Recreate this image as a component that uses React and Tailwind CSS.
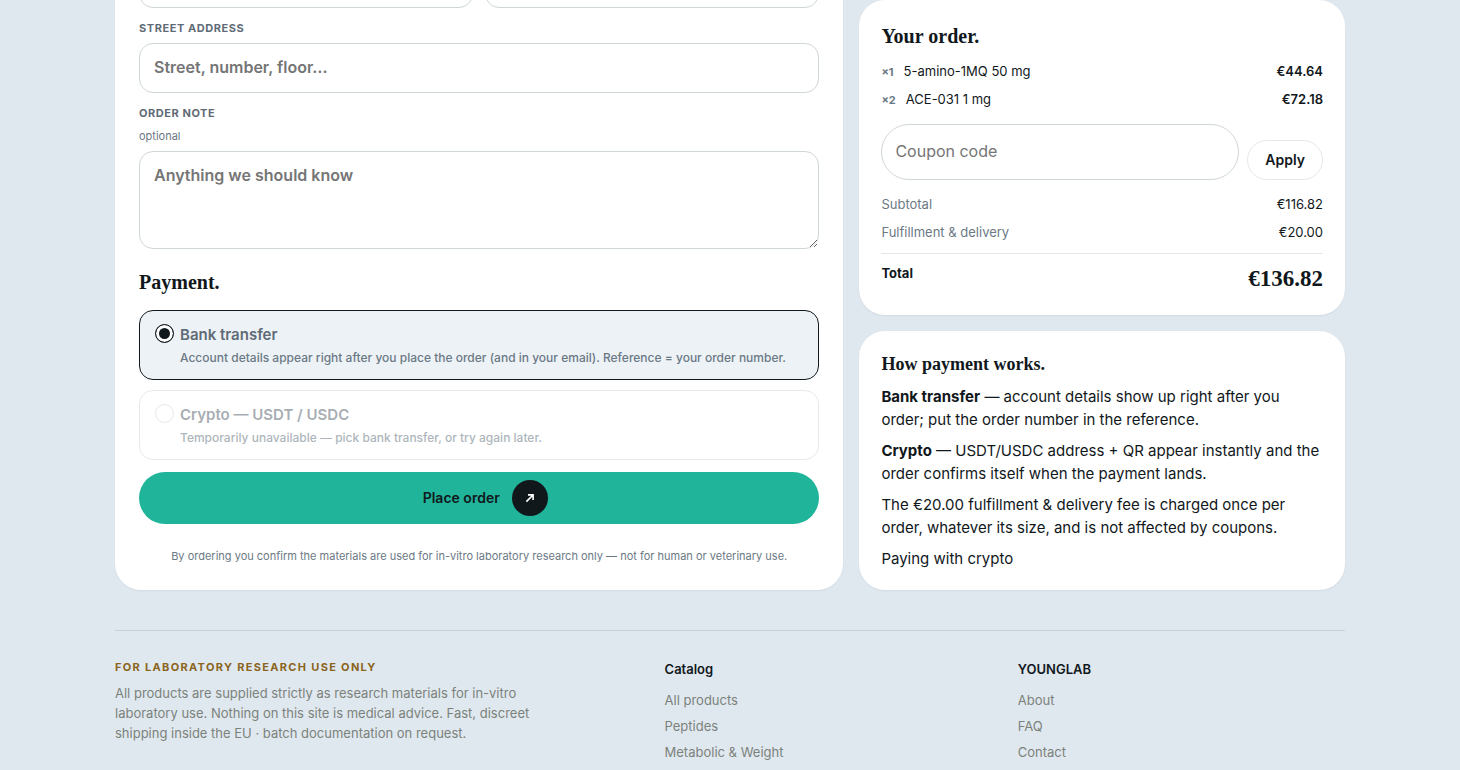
import { useState } from 'react';

const items = [
  { qty: 1, name: '5-amino-1MQ 50 mg', price: '€44.64' },
  { qty: 2, name: 'ACE-031 1 mg', price: '€72.18' },
];

const methods = [
  {
    id: 'bank',
    title: 'Bank transfer',
    note: 'Account details appear right after you place the order (and in your email). Reference = your order number.',
  },
  {
    id: 'crypto',
    title: 'Crypto — USDT / USDC',
    note: 'Temporarily unavailable — pick bank transfer, or try again later.',
    disabled: true,
  },
];

const footerLinks = [
  { title: 'Catalog', links: ['All products', 'Peptides', 'Metabolic & Weight'] },
  { title: 'YOUNGLAB', links: ['About', 'FAQ', 'Contact'] },
];

const field =
  'w-full rounded-[14px] border border-[#cfd6d8] bg-white px-3.5 text-base font-semibold text-[#11181c] placeholder:text-[#757575] focus:outline-none focus:border-[#11181c]';
const fieldLabel = 'text-[11px] leading-4 font-bold tracking-wider uppercase text-[#5f6b76]';
const card = 'bg-white shadow-[0_1px_2px_rgba(17,24,28,0.06)]';
const serif = "font-['Liberation_Serif',serif] font-semibold";

function CheckoutForm() {
  const [method, setMethod] = useState('bank');

  return (
    <form
      onSubmit={(e) => e.preventDefault()}
      className={`${card} -mt-[42px] flex flex-col gap-3 rounded-b-[26px] px-6 pb-6`}
    >
      <div className="grid grid-cols-2 gap-3">
        <input aria-label="City" className={`${field} h-[50px]`} />
        <input aria-label="Postal code" className={`${field} h-[50px]`} />
      </div>

      <div className="flex flex-col gap-[7px]">
        <label htmlFor="street" className={fieldLabel}>Street address</label>
        <input id="street" placeholder="Street, number, floor…" className={`${field} h-[50px] pb-0.5`} />
      </div>

      <div className="flex flex-col gap-[7px]">
        <label htmlFor="note" className={fieldLabel}>Order note</label>
        <span className="text-[11px] leading-4 text-[#6b7985]">optional</span>
        <textarea
          id="note"
          rows={3}
          placeholder="Anything we should know"
          className={`${field} block h-[98px] resize-y py-[11px]`}
        />
      </div>

      <h2 className={`${serif} pt-2 pb-[3px] text-xl leading-[26px]`}>Payment.</h2>

      <div className="flex flex-col gap-2.5">
        {methods.map((m) => (
          <label
            key={m.id}
            className={`flex items-start gap-1.5 rounded-[14px] border px-[15px] py-[13px] ${
              method === m.id ? 'border-[#11181c] bg-[#edf2f7]' : 'border-[#d3d7da] bg-white'
            } ${m.disabled ? 'opacity-55' : ''}`}
          >
            <input
              type="radio"
              name="method"
              value={m.id}
              checked={method === m.id}
              disabled={m.disabled}
              onChange={() => setMethod(m.id)}
              className="size-[19px] shrink-0 appearance-none rounded-full border border-[#d3d7da] bg-white checked:border-[#11181c] checked:bg-[#11181c] checked:shadow-[inset_0_0_0_3px_#fff]"
            />
            <span className="flex flex-col gap-1">
              <span className="text-[15px] leading-[22px] font-semibold text-[#5f6b76]">{m.title}</span>
              <span className="text-xs leading-4 font-medium text-[#6b7985]">{m.note}</span>
            </span>
          </label>
        ))}
      </div>

      <button
        type="submit"
        className="flex h-[52px] items-center justify-center gap-3 rounded-full bg-[#20b49a] pl-3 text-sm font-semibold"
      >
        Place order
        <span className="flex size-9 items-center justify-center rounded-full bg-[#11181c] text-white">
          <svg className="size-2.5" viewBox="0 0 10 10" fill="none" stroke="currentColor" strokeWidth="1.6">
            <path d="M1.4 8.6 8 2M3 1.9h5.1V7" />
          </svg>
        </span>
      </button>

      <p className="pt-2.5 text-center text-[11px] leading-5 text-[#6b7985]">
        By ordering you confirm the materials are used for in-vitro laboratory research only — not for human or
        veterinary use.
      </p>
    </form>
  );
}

function OrderSummary() {
  return (
    <section className={`${card} rounded-[26px] p-[22px] text-[13px]`}>
      <h2 className={`${serif} text-xl leading-[29px]`}>Your order.</h2>
      <ul className="mt-[7px]">
        {items.map((item) => (
          <li key={item.name} className="flex h-7 items-center justify-between">
            <span className="flex items-baseline gap-2.5">
              <span className="text-[11px] font-bold text-[#6b7985]">×{item.qty}</span>
              {item.name}
            </span>
            <span className="font-semibold">{item.price}</span>
          </li>
        ))}
      </ul>

      <div className="mt-2.5 flex items-end gap-2">
        <input
          aria-label="Coupon code"
          placeholder="Coupon code"
          className="h-14 min-w-0 flex-1 rounded-full border border-[#cfd6d8] px-[13px] pb-0.5 text-base placeholder:text-[#757575] focus:outline-none"
        />
        <button type="button" className="h-10 rounded-full border border-[#e4e8eb] px-[17px] text-sm font-semibold">
          Apply
        </button>
      </div>

      <dl className="mt-[11px]">
        <div className="flex h-7 items-center justify-between">
          <dt className="text-[#6b7985]">Subtotal</dt>
          <dd>€116.82</dd>
        </div>
        <div className="flex h-7 items-center justify-between">
          <dt className="text-[#6b7985]">Fulfillment &amp; delivery</dt>
          <dd>€20.00</dd>
        </div>
        <div className="mt-1.5 flex items-start justify-between border-t border-[#e4e8eb] pt-2.5">
          <dt className="leading-[18px] font-bold">Total</dt>
          <dd className={`${serif} text-[23px] leading-[29px]`}>€136.82</dd>
        </div>
      </dl>
    </section>
  );
}

function PaymentInfo() {
  return (
    <section className={`${card} rounded-[26px] px-[22px] pt-[22px] pb-5`}>
      <h2 className={`${serif} text-lg leading-[22px]`}>How payment works.</h2>
      <div className="mt-2.5 flex flex-col gap-2 text-[15px] leading-[23px]">
        <p>
          <strong className="font-bold">Bank transfer</strong> — account details show up right after you order; put the
          order number in the reference.
        </p>
        <p>
          <strong className="font-bold">Crypto</strong> — USDT/USDC address + QR appear instantly and the order confirms
          itself when the payment lands.
        </p>
        <p>
          The €20.00 fulfillment &amp; delivery fee is charged once per order, whatever its size, and is not affected by
          coupons.
        </p>
        <a href="#crypto">Paying with crypto</a>
      </div>
    </section>
  );
}

function Footer() {
  return (
    <footer className="mt-10 grid grid-cols-[1.6fr_1fr_1fr] gap-[26px] border-t border-[#c8d1d9] pt-7 text-[#7b827c]">
      <div>
        <p className="text-[11px] leading-4 font-bold tracking-[1.32px] uppercase text-[#8a6420]">
          For laboratory research use only
        </p>
        <p className="mt-2 max-w-[420px] text-[13px] leading-5">
          All products are supplied strictly as research materials for in-vitro laboratory use. Nothing on this site is
          medical advice. Fast, discreet shipping inside the EU · batch documentation on request.
        </p>
      </div>
      {footerLinks.map((col) => (
        <nav key={col.title} aria-label={col.title} className="text-[13px]">
          <h3 className="leading-5 font-semibold text-[#11181c]">{col.title}</h3>
          <ul className="mt-2">
            {col.links.map((link) => (
              <li key={link} className="leading-[26px]">
                <a href="#top" className="hover:text-[#11181c]">{link}</a>
              </li>
            ))}
          </ul>
        </nav>
      ))}
    </footer>
  );
}

export default function App() {
  return (
    <div className="min-h-screen overflow-hidden bg-[#e0e8ef] font-['Inter',sans-serif] text-[#11181c]">
      <div className="mx-auto max-w-[1230px]">
        <main className="grid grid-cols-[3fr_2fr] items-start gap-4">
          <CheckoutForm />
          <aside className="flex flex-col gap-4">
            <OrderSummary />
            <PaymentInfo />
          </aside>
        </main>
        <Footer />
      </div>
    </div>
  );
}
